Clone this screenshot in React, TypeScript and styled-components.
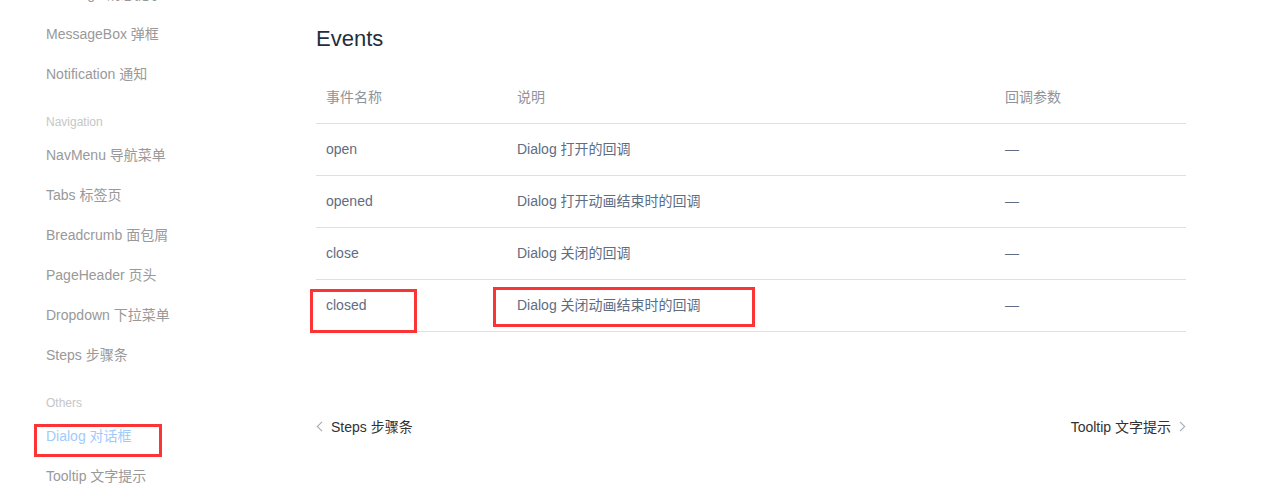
import React from "react";
import styled, { createGlobalStyle } from "styled-components";

const Global = createGlobalStyle`
  html, body { margin: 0; padding: 0; background: #fff; }
  body {
    font-family: "Liberation Sans", Arial, "Noto Sans CJK SC", sans-serif;
    overflow: hidden;
  }
`;

const Page = styled.div`
  display: flex;
  width: 1263px;
  height: 500px;
  overflow: hidden;
`;

const Sidebar = styled.nav`
  width: 276px;
  flex: none;
  margin-top: -26px;
  padding-left: 46px;
  box-sizing: border-box;
`;

const NavItem = styled.div<{ $active?: boolean }>`
  position: relative;
  height: 40px;
  line-height: 40px;
  font-size: 14px;
  color: ${(p) => (p.$active ? "#a0cbfd" : "#999999")};
  white-space: nowrap;
`;

const GroupTitle = styled.div`
  margin-top: 15px;
  height: 26px;
  line-height: 26px;
  font-size: 12px;
  color: #c6c6c6;
`;

const Mark = styled.span<{ $l: number; $t: number; $w: number; $h: number }>`
  position: absolute;
  left: ${(p) => p.$l}px;
  top: ${(p) => p.$t}px;
  width: ${(p) => p.$w}px;
  height: ${(p) => p.$h}px;
  border: 3px solid #fb3535;
  box-sizing: border-box;
  pointer-events: none;
`;

const Main = styled.main`
  flex: 1;
  padding: 24px 77px 0 40px;
`;

const Heading = styled.h3`
  margin: 0 0 18px;
  font-size: 22px;
  line-height: 30px;
  font-weight: 400;
  color: #1f2f3d;
`;

const Table = styled.table`
  width: 870px;
  border-collapse: collapse;
  font-size: 14px;
  table-layout: fixed;
`;

const Th = styled.th<{ $w: number }>`
  box-sizing: border-box;
  width: ${(p) => p.$w}px;
  text-align: left;
  font-weight: 400;
  color: #909399;
  padding: 15px 10px;
  line-height: 21px;
  border-bottom: 1px solid #dcdfe6;
  white-space: nowrap;
`;

const Td = styled.td`
  position: relative;
  color: #5e6d82;
  padding: 15px 10px;
  line-height: 21px;
  border-bottom: 1px solid #dcdfe6;
  white-space: nowrap;
`;

const FooterNav = styled.div`
  display: flex;
  justify-content: space-between;
  align-items: center;
  width: 870px;
  margin-top: 84px;
  height: 20px;
  font-size: 14px;
  color: #303133;
`;

const NavLink = styled.span`
  display: flex;
  align-items: center;
  gap: 8px;
  white-space: nowrap;
`;

const Chevron = ({ dir }: { dir: "left" | "right" }) => (
  <svg width="7" height="11" viewBox="0 0 7 11" fill="none">
    <path
      d={dir === "left" ? "M6 0.8 L1.3 5.5 L6 10.2" : "M1 0.8 L5.7 5.5 L1 10.2"}
      stroke="#a8abb2"
      strokeWidth="1.1"
    />
  </svg>
);

const groups: { title?: string; items: string[] }[] = [
  { items: ["Message 消息提示", "MessageBox 弹框", "Notification 通知"] },
  {
    title: "Navigation",
    items: ["NavMenu 导航菜单", "Tabs 标签页", "Breadcrumb 面包屑", "PageHeader 页头", "Dropdown 下拉菜单", "Steps 步骤条"],
  },
  { title: "Others", items: ["Dialog 对话框", "Tooltip 文字提示"] },
];

const rows = [
  ["open", "Dialog 打开的回调", "—"],
  ["opened", "Dialog 打开动画结束时的回调", "—"],
  ["close", "Dialog 关闭的回调", "—"],
  ["closed", "Dialog 关闭动画结束时的回调", "—"],
];

export default function App() {
  return (
    <Page>
      <Global />
      <Sidebar>
        {groups.map((g, gi) => (
          <div key={gi}>
            {g.title && <GroupTitle>{g.title}</GroupTitle>}
            {g.items.map((it) => (
              <NavItem key={it} $active={it === "Dialog 对话框"}>
                {it}
                {it === "Dialog 对话框" && <Mark $l={-12} $t={8} $w={128} $h={33} />}
              </NavItem>
            ))}
          </div>
        ))}
      </Sidebar>
      <Main>
        <Heading>Events</Heading>
        <Table>
          <thead>
            <tr>
              <Th $w={191}>事件名称</Th>
              <Th $w={488}>说明</Th>
              <Th $w={191}>回调参数</Th>
            </tr>
          </thead>
          <tbody>
            {rows.map((r, i) => (
              <tr key={r[0]}>
                <Td>
                  {r[0]}
                  {i === 3 && <Mark $l={-6} $t={9} $w={107} $h={44} />}
                </Td>
                <Td>
                  {r[1]}
                  {i === 3 && <Mark $l={-14} $t={7} $w={262} $h={40} />}
                </Td>
                <Td>{r[2]}</Td>
              </tr>
            ))}
          </tbody>
        </Table>
        <FooterNav>
          <NavLink>
            <Chevron dir="left" />
            Steps 步骤条
          </NavLink>
          <NavLink>
            Tooltip 文字提示
            <Chevron dir="right" />
          </NavLink>
        </FooterNav>
      </Main>
    </Page>
  );
}
